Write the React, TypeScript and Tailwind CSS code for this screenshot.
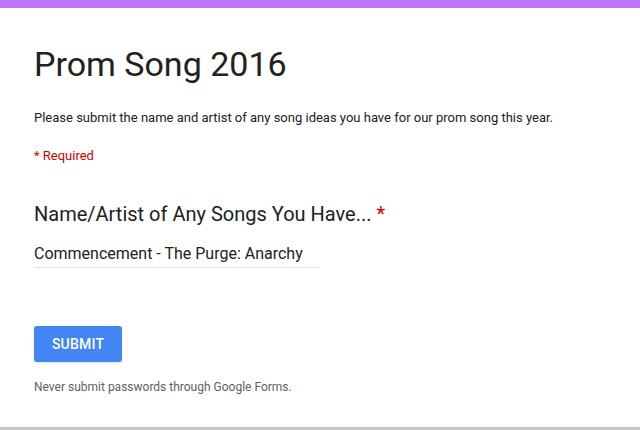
const App = () => {
    return (
        <div className="w-[640px] h-[430px] bg-white flex flex-col overflow-hidden" style={{ fontFamily: 'Roboto, "Liberation Sans", sans-serif' }}>
            {/* Theme bar */}
            <div className="h-[8px] bg-[#c175fc]" />

            <div className="flex-1 flex flex-col px-[34px]">
                {/* Header */}
                <h1 className="mt-[36px] text-[34px] leading-[40px] text-[#212121]">Prom Song 2016</h1>
                <p className="mt-[25px] text-[13px] leading-[18px] text-[#212121]">
                    Please submit the name and artist of any song ideas you have for our prom song this year.
                </p>
                <p className="mt-[20px] text-[13px] leading-[18px] text-[#d50000]">* Required</p>

                {/* Question */}
                <div className="mt-[37px] text-[20px] leading-[24px] text-[#212121]">
                    Name/Artist of Any Songs You Have... <span className="text-[#d50000]">*</span>
                </div>
                <div className="mt-[18px] w-[286px] border-b border-[#e0e0e0] pb-[3px] text-[16px] leading-[20px] text-[#212121]">
                    Commencement - The Purge: Anarchy
                </div>

                {/* Submit */}
                <button className="mt-[58px] w-[88px] h-[36px] rounded-[3px] bg-[#4285f4] text-white text-[14px] font-medium tracking-[0.2px] shadow-sm">
                    SUBMIT
                </button>
                <p className="mt-[17px] text-[12px] leading-[16px] text-[#616161]">Never submit passwords through Google Forms.</p>
            </div>

            <div className="h-[3px] bg-[#c8c2cc]" />
        </div>
    );
};

export default App;
